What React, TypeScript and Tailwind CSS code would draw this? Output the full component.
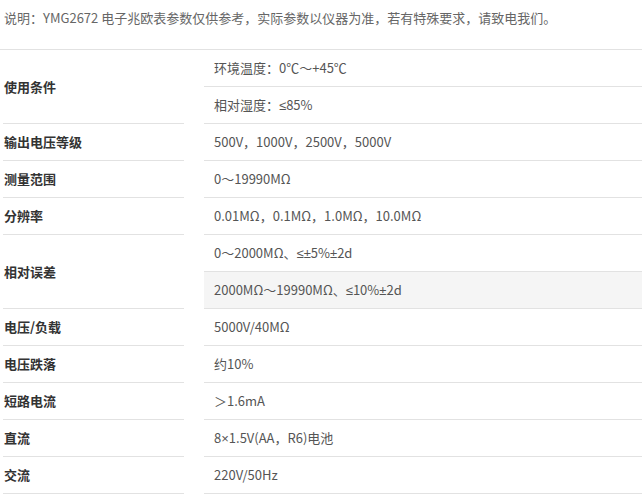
// YMG2672 兆欧表参数表
const rows: { label: string; values: string[] }[] = [
  { label: "使用条件", values: ["环境温度：0℃～+45℃", "相对湿度：≤85%"] },
  { label: "输出电压等级", values: ["500V，1000V，2500V，5000V"] },
  { label: "测量范围", values: ["0～19990MΩ"] },
  { label: "分辨率", values: ["0.01MΩ，0.1MΩ，1.0MΩ，10.0MΩ"] },
  { label: "相对误差", values: ["0～2000MΩ、≤±5%±2d", "2000MΩ～19990MΩ、≤10%±2d"] },
  { label: "电压/负载", values: ["5000V/40MΩ"] },
  { label: "电压跌落", values: ["约10%"] },
  { label: "短路电流", values: ["＞1.6mA"] },
  { label: "直流", values: ["8×1.5V(AA，R6)电池"] },
  { label: "交流", values: ["220V/50Hz"] },
];

// math signs look narrow in the original, so render them in a latin face
function Value({ text }: { text: string }) {
  const parts = text.split(/([≤±×])/);
  return (
    <>
      {parts.map((p, i) =>
        /^[≤±×]$/.test(p) ? (
          <span key={i} className="font-['Liberation_Sans',sans-serif]">
            {p}
          </span>
        ) : (
          p
        )
      )}
    </>
  );
}

export default function App() {
  return (
    <div
      className="w-[642px] h-[496px] overflow-hidden bg-white text-[13px]"
      style={{ fontFamily: '"Noto Sans CJK SC", "Noto Sans", sans-serif' }}
    >
      <p className="pt-[8px] pl-[4px] h-[49px] leading-[20px] text-[#666]">
        说明：YMG2672 电子兆欧表参数仅供参考，实际参数以仪器为准，若有特殊要求，请致电我们。
      </p>
      <div className="border-t border-[#e2e2e2]">
        {rows.map((row) => (
          <div key={row.label} className="flex">
            <div className="ml-[3px] w-[181px] pl-px flex items-center border-b border-[#e2e2e2] font-bold text-[#333]">
              {row.label}
            </div>
            <div className="ml-[20px] flex-1 flex flex-col">
              {row.values.map((v, i) => (
                <div
                  key={v}
                  className={
                    "h-[37px] pl-[10px] flex items-center border-b border-[#e2e2e2] text-[#555] " +
                    (row.label === "相对误差" && i === 1 ? "bg-[#f5f5f5]" : "")
                  }
                >
                  <span>
                    <Value text={v} />
                  </span>
                </div>
              ))}
            </div>
          </div>
        ))}
      </div>
    </div>
  );
}
